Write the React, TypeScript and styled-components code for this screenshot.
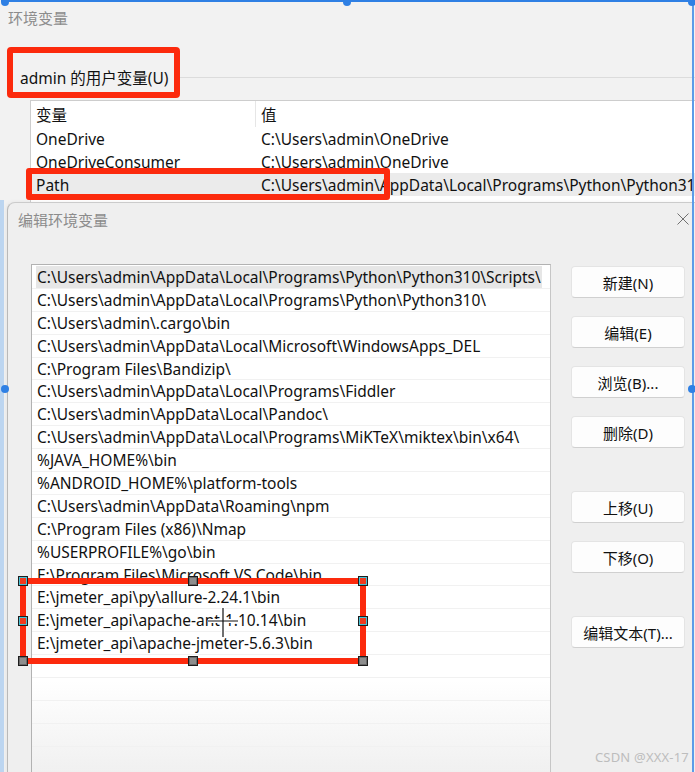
import React from 'react';
import styled, { createGlobalStyle } from 'styled-components';

const FONT = `"Noto Sans", "Noto Sans CJK SC", sans-serif`;

const GlobalStyle = createGlobalStyle`
  html, body {
    margin: 0;
    padding: 0;
    background: #f2f2f2;
  }
  body {
    font-family: ${FONT};
  }
`;

const Page = styled.div`
  position: relative;
  width: 695px;
  height: 772px;
  overflow: hidden;
  background: #f2f2f2;
  font-family: ${FONT};
  color: #111;
`;

/* ---------- 环境变量 window behind ---------- */

const MainWindow = styled.section`
  height: 202px;
  overflow: hidden;
  padding-left: 8px;
  box-sizing: border-box;
`;

const WindowTitle = styled.div`
  height: 36px;
  line-height: 36px;
  font-size: 15px;
  color: #8c8c8c;
`;

const GroupRow = styled.div`
  display: flex;
  align-items: center;
  gap: 10px;
  height: 26px;
  margin-top: 28px;
  padding-left: 12px;
`;

const GroupLabel = styled.span`
  font-size: 15.5px;
  white-space: nowrap;
`;

const GroupRule = styled.div`
  flex: 1;
  height: 1px;
  background: #dcdcdc;
`;

const VarTable = styled.div`
  margin: 10px 0 0 22px;
  height: 110px;
  background: #fff;
  border-top: 1px solid #cdcdcd;
  border-left: 1px solid #cdcdcd;
`;

const VarRow = styled.div<{ $header?: boolean; $selected?: boolean }>`
  display: grid;
  grid-template-columns: 225px 1fr;
  height: ${p => (p.$header ? 26 : 23)}px;
  background: ${p => (p.$selected ? '#ebebeb' : 'transparent')};
  font-size: 15.5px;
  white-space: nowrap;
`;

const VarCell = styled.div<{ $divider?: boolean }>`
  display: flex;
  align-items: center;
  padding-left: 5px;
  overflow: hidden;
  border-right: ${p => (p.$divider ? '1px solid #e6e6e6' : 'none')};
`;

/* ---------- 编辑环境变量 dialog ---------- */

const Dialog = styled.section`
  margin-left: 7px;
  height: 570px;
  box-sizing: border-box;
  background: #efefef;
  border-top: 1px solid #cbcbcb;
  border-left: 1px solid #b9b9b9;
  border-top-left-radius: 8px;
  box-shadow: -1px 0 4px rgba(0, 0, 0, 0.06);
`;

const DialogTitle = styled.div`
  display: flex;
  align-items: center;
  justify-content: space-between;
  height: 32px;
  padding: 0 6px 0 10px;
  font-size: 15px;
  color: #8c8c8c;
`;

const DialogBody = styled.div`
  display: flex;
  gap: 20px;
  padding: 29px 0 0 23px;
`;

const PathList = styled.div`
  width: 520px;
  height: 508px;
  flex: none;
  box-sizing: border-box;
  overflow: hidden;
  padding-top: 1px;
  background: linear-gradient(#ffffff 82%, #f0f0f0);
  border: 1px solid #b2b2b2;
  border-right-color: #c6c6c6;
  border-bottom: none;
`;

const PathRow = styled.div`
  display: flex;
  align-items: stretch;
  height: 22.9px;
  box-sizing: border-box;
  padding-left: 4px;
  border-bottom: 1px solid #f1f1f1;
  font-size: 15.5px;
  white-space: nowrap;
`;

const PathText = styled.span<{ $selected?: boolean }>`
  display: flex;
  align-items: center;
  padding: 0 1px;
  background: ${p => (p.$selected ? '#e6e6e6' : 'transparent')};
`;

const ButtonColumn = styled.div`
  display: flex;
  flex-direction: column;
`;

const ActionButton = styled.button<{ $gap: number }>`
  width: 114px;
  height: 32px;
  margin-top: ${p => p.$gap}px;
  padding: 0;
  background: #fdfdfd;
  border: 1px solid #e4e4e4;
  border-bottom-color: #d0d0d0;
  border-radius: 4px;
  font-family: ${FONT};
  font-size: 15px;
  color: #111;
`;

/* ---------- annotation overlays (screenshot markup) ---------- */

const RedFrame = styled.div<{ $x: number; $y: number; $w: number; $h: number; $r: number }>`
  position: absolute;
  left: ${p => p.$x}px;
  top: ${p => p.$y}px;
  width: ${p => p.$w}px;
  height: ${p => p.$h}px;
  box-sizing: border-box;
  border: 6px solid #fc2a0d;
  border-radius: ${p => p.$r}px;
`;

type Pos = 'start' | 'mid' | 'end';
const edge = (p: Pos) => (p === 'start' ? '-3px' : p === 'mid' ? '50%' : 'calc(100% + 3px)');

const Handle = styled.div<{ $h: Pos; $v: Pos; $tone: 'cyan' | 'grey' }>`
  position: absolute;
  left: ${p => edge(p.$h)};
  top: ${p => edge(p.$v)};
  width: 10px;
  height: 10px;
  transform: translate(-50%, -50%);
  box-sizing: border-box;
  border: 1px solid #1d1d1d;
  background: ${p => (p.$tone === 'cyan' ? '#f03a1e' : '#8e8e8e')};
  box-shadow: inset 0 0 0 1px ${p => (p.$tone === 'cyan' ? '#48c2d6' : '#6a6a6a')};
`;

const Crosshair = styled.svg`
  position: absolute;
  left: 181px;
  top: 22px;
`;

const SelectionFrame = styled.div`
  position: absolute;
  top: 0;
  left: 1px;
  right: 1px;
  bottom: -4px;
  border-top: 2px solid #2f80e4;
  border-right: 2px solid #5c9ce8;
  pointer-events: none;
`;

const DesktopEdge = styled.div`
  position: absolute;
  left: 0;
  top: 200px;
  bottom: 0;
  width: 4px;
  background: #bcd5f0;
`;

const SelectionDot = styled.div<{ $h: Pos; $v: Pos }>`
  position: absolute;
  left: ${p => (p.$h === 'start' ? '4px' : p.$h === 'mid' ? '50%' : '100%')};
  top: ${p => (p.$v === 'start' ? '0' : '50%')};
  width: 8px;
  height: 8px;
  transform: translate(-50%, -50%);
  border-radius: 50%;
  background: #2f80e4;
`;

const Watermark = styled.div`
  position: absolute;
  right: 6px;
  bottom: 6px;
  font-size: 13px;
  color: #bdbdbd;
  letter-spacing: 0.2px;
`;

const paths = [
  'C:\\Users\\admin\\AppData\\Local\\Programs\\Python\\Python310\\Scripts\\',
  'C:\\Users\\admin\\AppData\\Local\\Programs\\Python\\Python310\\',
  'C:\\Users\\admin\\.cargo\\bin',
  'C:\\Users\\admin\\AppData\\Local\\Microsoft\\WindowsApps_DEL',
  'C:\\Program Files\\Bandizip\\',
  'C:\\Users\\admin\\AppData\\Local\\Programs\\Fiddler',
  'C:\\Users\\admin\\AppData\\Local\\Pandoc\\',
  'C:\\Users\\admin\\AppData\\Local\\Programs\\MiKTeX\\miktex\\bin\\x64\\',
  '%JAVA_HOME%\\bin',
  '%ANDROID_HOME%\\platform-tools',
  'C:\\Users\\admin\\AppData\\Roaming\\npm',
  'C:\\Program Files (x86)\\Nmap',
  '%USERPROFILE%\\go\\bin',
  'E:\\Program Files\\Microsoft VS Code\\bin',
  'E:\\jmeter_api\\py\\allure-2.24.1\\bin',
  'E:\\jmeter_api\\apache-ant-1.10.14\\bin',
  'E:\\jmeter_api\\apache-jmeter-5.6.3\\bin',
  '', '', '', '', '',
];

const userVars = [
  { name: 'OneDrive', value: 'C:\\Users\\admin\\OneDrive' },
  { name: 'OneDriveConsumer', value: 'C:\\Users\\admin\\OneDrive' },
  { name: 'Path', value: 'C:\\Users\\admin\\AppData\\Local\\Programs\\Python\\Python310\\Scripts\\', selected: true },
  { name: 'OS_DRIVER_NUMBER_PATH', value: 'C:\\Users\\admin\\AppData\\Local\\Temp' },
];

const buttons = [
  { label: '新建(N)', gap: 2 },
  { label: '编辑(E)', gap: 18 },
  { label: '浏览(B)...', gap: 18 },
  { label: '删除(D)', gap: 18 },
  { label: '上移(U)', gap: 43 },
  { label: '下移(O)', gap: 18 },
  { label: '编辑文本(T)...', gap: 43 },
];

const handles: { h: Pos; v: Pos; tone: 'cyan' | 'grey' }[] = [
  { h: 'start', v: 'start', tone: 'cyan' },
  { h: 'mid', v: 'start', tone: 'grey' },
  { h: 'end', v: 'start', tone: 'cyan' },
  { h: 'start', v: 'mid', tone: 'cyan' },
  { h: 'end', v: 'mid', tone: 'cyan' },
  { h: 'start', v: 'end', tone: 'grey' },
  { h: 'mid', v: 'end', tone: 'grey' },
  { h: 'end', v: 'end', tone: 'grey' },
];

const dots: { h: Pos; v: Pos }[] = [
  { h: 'start', v: 'start' },
  { h: 'mid', v: 'start' },
  { h: 'end', v: 'start' },
  { h: 'start', v: 'mid' },
  { h: 'end', v: 'mid' },
];

const App: React.FC = () => {
  return (
    <Page>
      <GlobalStyle />
      <MainWindow>
        <WindowTitle>环境变量</WindowTitle>
        <GroupRow>
          <GroupLabel>admin 的用户变量(U)</GroupLabel>
          <GroupRule />
        </GroupRow>
        <VarTable>
          <VarRow $header>
            <VarCell $divider>变量</VarCell>
            <VarCell>值</VarCell>
          </VarRow>
          {userVars.map(v => (
            <VarRow key={v.name} $selected={v.selected}>
              <VarCell>{v.name}</VarCell>
              <VarCell>{v.value}</VarCell>
            </VarRow>
          ))}
        </VarTable>
      </MainWindow>

      <Dialog>
        <DialogTitle>
          编辑环境变量
          <svg width="12" height="12" viewBox="0 0 12 12">
            <path d="M0.5 0.5 L11.5 11.5 M11.5 0.5 L0.5 11.5" stroke="#707070" strokeWidth="1" fill="none" />
          </svg>
        </DialogTitle>
        <DialogBody>
          <PathList>
            {paths.map((p, i) => (
              <PathRow key={i}>
                <PathText $selected={i === 0}>{p}</PathText>
              </PathRow>
            ))}
          </PathList>
          <ButtonColumn>
            {buttons.map(b => (
              <ActionButton key={b.label} $gap={b.gap}>
                {b.label}
              </ActionButton>
            ))}
          </ButtonColumn>
        </DialogBody>
      </Dialog>

      <RedFrame $x={7} $y={47} $w={173} $h={51} $r={4} />
      <RedFrame $x={26} $y={168} $w={364} $h={32} $r={3} />
      <RedFrame $x={20} $y={578} $w={346} $h={86} $r={0}>
        {handles.map((h, i) => (
          <Handle key={i} $h={h.h} $v={h.v} $tone={h.tone} />
        ))}
        <Crosshair width="32" height="32" viewBox="0 0 32 32">
          <path d="M16 2 V31 M1 15 H31" stroke="#fff" strokeWidth="4" fill="none" />
          <path d="M16 2 V31 M1 15 H31" stroke="#111" strokeWidth="1.2" fill="none" />
        </Crosshair>
      </RedFrame>

      <DesktopEdge />
      <SelectionFrame>
        {dots.map((d, i) => (
          <SelectionDot key={i} $h={d.h} $v={d.v} />
        ))}
      </SelectionFrame>

      <Watermark>CSDN @XXX-17</Watermark>
    </Page>
  );
};

export default App;
